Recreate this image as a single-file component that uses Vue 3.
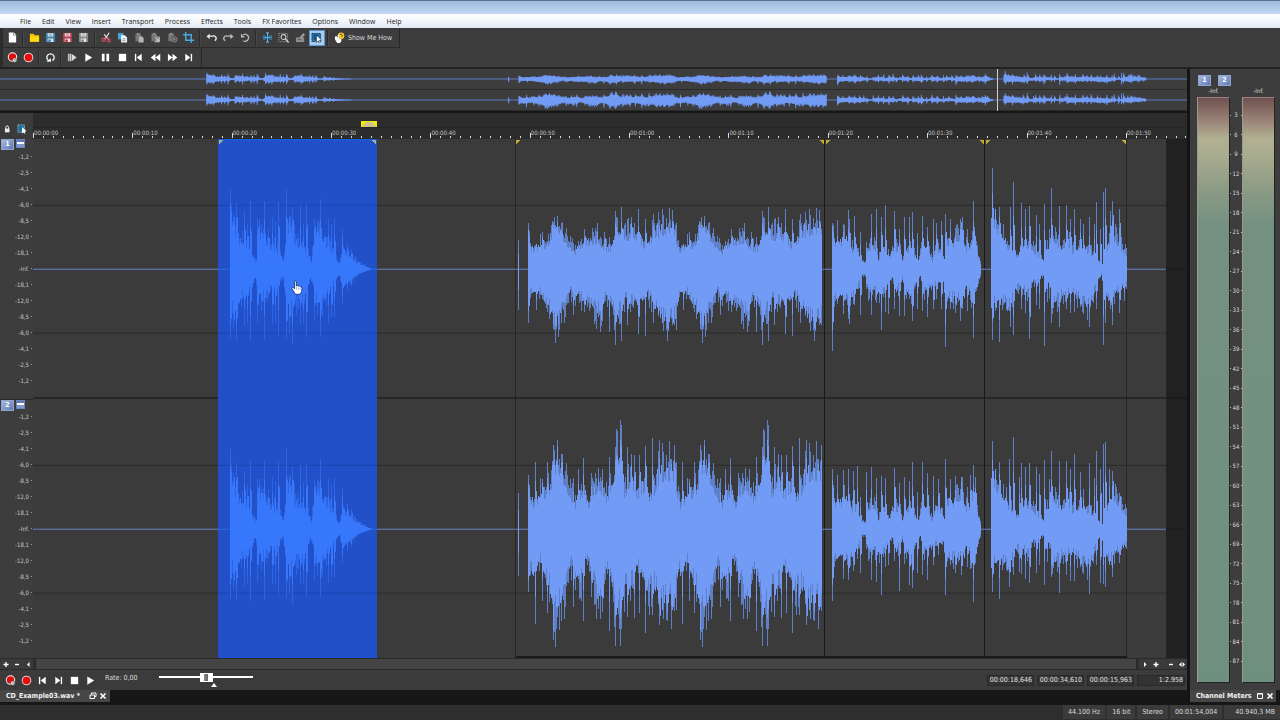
<script setup>
import { ref } from "vue";

const LANE_W = 1154;
const DATA_END = 1133;
const MID = 130;
const PX_PER_10S = 99.35;

const menus = ["File", "Edit", "View", "Insert", "Transport", "Process", "Effects", "Tools", "FX Favorites", "Options", "Window", "Help"];

// icon markup, drawn on a 12x12 grid
const floppy = (c) => `<path d="M1 1h10v10H1z" fill="${c}"/><path d="M3 1h6v4H3zM3 7h6v4H3z" fill="#e8e8e8"/><path d="M4 2h4M4 3.5h4M4 8.5h2v2.5H4z" stroke="${c}" stroke-width=".7" fill="${c}"/>`;
const clip = '<path d="M1.500 2h6v2.500H5V10H1.500z" fill="#777"/><path d="M3 1h3v2H3z" fill="#8c8c8c"/>';
const icons = {
  new: '<path d="M2 0.500h5.500L10 3v8.500H2z" fill="#fff"/><path d="M7 .5v3h3" fill="none" stroke="#777" stroke-width=".8"/>',
  open: '<path d="M1 2h4l1 1.500h5V10.500H1z" fill="#f5c400"/><path d="M1 5h10v5.500H1z" fill="#ffd910"/>',
  save: floppy("#3d83ad"),
  saveAs: floppy("#b8394d"),
  saveAll: floppy("#858585"),
  cut: '<path d="M9 .8L4 8M3.500 2.500L8.500 8.500" stroke="#e3e3e3" stroke-width="1.300"/><circle cx="2.800" cy="8.600" r="1.700" fill="none" stroke="#d04b5c" stroke-width="1.300"/><circle cx="8.600" cy="9.300" r="1.500" fill="none" stroke="#d04b5c" stroke-width="1.200"/><path d="M3 6.500l5.500.4" stroke="#d04b5c"/>',
  copy: '<path d="M1 1h6v7H1z" fill="#4aa4dc"/><path d="M4.500 3.500h4L11 6v5.500H4.500z" fill="#f4f4f4"/><path d="M6 7.500h3.500M6 9.500h3.500" stroke="#4a8cb8" stroke-width=".8"/>',
  paste: clip + '<path d="M5 4.500h3.500l2 2V11.500H5z" fill="#b4b4b4"/>',
  pasteMix: clip + '<path d="M5 4.500h5.500v7H5z" fill="#8a8a8a"/><path d="M6 6l4 4M10 6v4H6" stroke="#ddd" fill="none"/>',
  pasteNew: clip + '<circle cx="8" cy="8" r="3" fill="#555" stroke="#8a8a8a"/><path d="M7 6.500l2.500 1.500L7 9.500z" fill="#999"/>',
  crop: '<path d="M3 0v9h9M0 3h9v9" fill="none" stroke="#4aa8e4" stroke-width="1.600"/>',
  undo: '<path d="M2.500 4.500h5a2.600 2.600 0 0 1 2 4.800" fill="none" stroke="#eee" stroke-width="1.500"/><path d="M0.500 5L4 2v5.500z" fill="#eee"/>',
  redo: '<path d="M9 4.500H4.500a2.600 2.600 0 0 0-2 4.800" fill="none" stroke="#bbb" stroke-width="1.500"/><path d="M11.500 5L8 2v5.500z" fill="#bbb"/>',
  repeat: '<path d="M3.500 3a3.800 3.800 0 1 1 0 6.500" fill="none" stroke="#bbb" stroke-width="1.400"/><path d="M1 1.500v4.500h4.500z" fill="#bbb"/>',
  edit: '<path d="M1 3.500h3v5H1zM8 3.500h3v5H8z" fill="#2f79a8"/><path d="M6 1v10M4.500 1h3M4.500 11h3M3 6h6" stroke="#5db3e8" stroke-width="1.200"/>',
  magnify: '<path d="M1 1.500h9.500v9H1z" fill="none" stroke="#aaa" stroke-dasharray="1 1"/><circle cx="6" cy="5.500" r="2.600" fill="#333" stroke="#ccc" stroke-width="1.200"/><path d="M8 7.500l3.500 4" stroke="#ddd" stroke-width="1.400"/>',
  pencil: '<path d="M1 6h9v5H1z" fill="#8c8c8c"/><path d="M4 7l5-6 2 1.500L7 8z" fill="#999"/><path d="M3 8h4" stroke="#555"/>',
  event: '<path d="M1 1.500h9.500v9H1z" fill="#2374b0" stroke="#0d2c4a" stroke-dasharray="1.500 1"/><path d="M3 3.500h5M3 5.500h5M3 7.500h3" stroke="#0f3354"/><path d="M6 3.500v8l2-1.800 1.200 2 1-.7-1-1.900 2.300-.3z" fill="#fff" stroke="#123" stroke-width=".5"/>',
  eventSmall: '<path d="M1 1h8v9H1z" fill="#1f6e9c" stroke="#a9cfe2" stroke-dasharray="1.200 1"/><path d="M6 3.500v8l2-1.800 1.200 2 1-.7-1-1.900 2.300-.3z" fill="#fff"/>',
  help: '<circle cx="7.800" cy="4" r="3.500" fill="#f3c927"/><path d="M6.500 3q1.500-1.500 2.500 0t-1.300 2" stroke="#6b5200" fill="none"/><path d="M1 5l2-.5 1 2V3h1.300v4l2.700.7V10l-1.500 2H3.500L1 8z" fill="#fff"/>',
  recArm: '<circle cx="6" cy="5.500" r="4.600" fill="#e00d0d" stroke="#f4f4f4" stroke-width="1.100"/><circle cx="8.500" cy="8.800" r="2.300" fill="#fff" stroke="#555" stroke-width=".7"/><path d="M8.500 7.500v1.500h1.200" stroke="#333" fill="none" stroke-width=".7"/>',
  rec: '<circle cx="6" cy="6" r="4.700" fill="#e80a0a" stroke="#e2cccc" stroke-width="1.100"/>',
  loop: '<path d="M4 9.500a4 4 0 1 1 4 0" fill="none" stroke="#f4f4f4" stroke-width="1.500"/><path d="M1.500 10.500h5V6.500z" fill="#f4f4f4"/>',
  playAll: '<path d="M1.500 2v8" stroke="#ddd"/><path d="M3.500 2v8" stroke="#ddd" stroke-width="1.600"/><path d="M5 2l5.500 4L5 10z" fill="#ddd"/>',
  play: '<path d="M2.500 1.500L10 6l-7.500 4.500z" fill="#fff"/>',
  pause: '<path d="M2 2h3v8H2zM7 2h3v8H7z" fill="#fff"/>',
  stop: '<path d="M2 2h8v8H2z" fill="#fff"/>',
  start: '<path d="M2.800 2v8" stroke="#fff" stroke-width="1.500"/><path d="M9.500 2v8L4 6z" fill="#fff"/>',
  rewind: '<path d="M6 2v8L.8 6zM11.200 2v8L6 6z" fill="#fff"/>',
  forward: '<path d="M1 2v8l5-4zM6 2v8l5.200-4z" fill="#fff"/>',
  end: '<path d="M9.200 2v8" stroke="#fff" stroke-width="1.500"/><path d="M2.500 2v8L8 6z" fill="#fff"/>',
  lock: '<path d="M3.500 5.500h5.500v4.500H3.500z" fill="#eee"/><path d="M4.500 6V4a1.700 1.700 0 0 1 3.400 0v2" fill="none" stroke="#eee" stroke-width="1.200"/>',
};

const editBar = [
  [["new", "New"]],
  [["open", "Open"], ["save", "Save"], ["saveAs", "Save As"], ["saveAll", "Save All"]],
  [["cut", "Cut"], ["copy", "Copy"], ["paste", "Paste"], ["pasteMix", "Mix"], ["pasteNew", "Paste to New"], ["crop", "Trim"]],
  [["undo", "Undo"], ["redo", "Redo"], ["repeat", "Repeat"]],
  [["edit", "Edit Tool"], ["magnify", "Magnify Tool"], ["pencil", "Pencil Tool"], ["event", "Event Tool"]],
];
const playBar = [
  [["recArm", "Arm for Record"], ["rec", "Record"]],
  [["loop", "Loop Playback"]],
  [["playAll", "Play All"], ["play", "Play"], ["pause", "Pause"], ["stop", "Stop"], ["start", "Go to Start"], ["rewind", "Rewind"], ["forward", "Forward"], ["end", "Go to End"]],
];
const miniBar = [["recArm", "Arm for Record"], ["rec", "Record"], ["start", "Go to Start"], ["end", "Go to End"], ["stop", "Stop"], ["play", "Play"]];

const dbLabels = ["-1,2", "-2,5", "-4,1", "-6,0", "-8,5", "-12,0", "-18,1", "-Inf.", "-18,1", "-12,0", "-8,5", "-6,0", "-4,1", "-2,5", "-1,2"];
const meterLabels = Array.from({ length: 29 }, (_, i) => (i + 1) * 3);
const rulerLabels = Array.from({ length: 12 }, (_, i) => `00:0${Math.floor(i / 6)}:${i % 6}0`);
const minorTicks = Array.from({ length: 117 }, (_, i) => i).filter((i) => i % 10);

// envelopes: flat lists of x, level; peaks: [x, up, down]
const intro = {
  x: 197, len: 142,
  up: [0, 50, 3, 44, 8, 30, 12, 24, 18, 24, 22, 12, 26, 8, 28, 38, 34, 30, 40, 22, 48, 18, 53, 8, 56, 34, 60, 48, 65, 28, 72, 22, 78, 14, 81, 7, 85, 38, 90, 30, 98, 22, 105, 12, 109, 5, 112, 20, 118, 13, 124, 9, 130, 5, 137, 2, 142, 0],
  down: [0, 38, 6, 36, 12, 26, 20, 20, 25, 8, 28, 25, 34, 25, 40, 18, 48, 14, 53, 7, 56, 32, 62, 38, 68, 26, 75, 22, 80, 8, 85, 24, 92, 34, 98, 22, 105, 12, 109, 5, 112, 18, 118, 13, 124, 8, 130, 4, 142, 0],
  peaks: [[0, 80, 70], [3, 56, 60], [6, 66, 71], [14, 58, 57], [17, 45, 54], [20, 68, 72], [27, 50, 53], [31, 44, 42], [34, 68, 71], [38, 40, 30], [42, 52, 55], [45, 48, 54], [48, 67, 66], [56, 80, 69], [59, 54, 65], [62, 62, 75], [70, 64, 55], [73, 46, 54], [76, 65, 68], [84, 50, 52], [87, 48, 46], [90, 70, 68], [94, 34, 30], [98, 50, 54], [101, 45, 48], [104, 51, 48], [112, 40, 34], [117, 25, 22], [121, 20, 18]],
};
const band1 = {
  x: 495, len: 294, period: 147,
  up: [0, 32, 4, 19, 12, 22, 20, 24, 25, 42, 33, 36, 39, 26, 47, 17, 55, 26, 68, 31, 75, 22, 82, 17, 87, 36, 93, 32, 105, 36, 118, 22, 125, 36, 132, 39, 145, 41, 151, 17],
  down: [0, 28, 5, 20, 12, 22, 20, 34, 26, 48, 32, 42, 38, 34, 42, 21, 52, 26, 62, 34, 72, 40, 78, 24, 87, 44, 93, 38, 97, 28, 105, 31, 116, 30, 119, 22, 125, 32, 132, 44, 139, 50, 147, 44, 152, 22],
  peaks: [[0, 46, 54], [8, 0, 41], [14, 37, 30], [19, 28, 43], [25, 47, 60], [27, 44, 74], [30, 42, 68], [32, 40, 0], [45, 20, 46], [56, 40, 42], [69, 46, 30], [73, 0, 57], [76, 37, 0], [81, 32, 63], [87, 58, 76], [93, 62, 72], [99, 0, 56], [103, 52, 0], [110, 60, 65], [117, 50, 67], [125, 55, 54], [131, 49, 0], [138, 51, 60], [140, 45, 62], [144, 59, 50]],
};
const band2 = {
  x: 495, len: 294, period: 147,
  up: [0, 36, 5, 24, 14, 34, 22, 39, 25, 62, 29, 66, 34, 55, 39, 42, 42, 34, 47, 24, 55, 39, 60, 24, 66, 42, 72, 42, 79, 29, 85, 46, 88, 68, 93, 62, 96, 36, 102, 48, 109, 34, 117, 46, 121, 32, 126, 40, 131, 55, 139, 58, 146, 58, 149, 34, 153, 24],
  down: [0, 38, 5, 40, 12, 29, 17, 41, 22, 56, 25, 84, 29, 74, 35, 66, 40, 44, 44, 29, 52, 56, 55, 28, 60, 31, 69, 60, 75, 54, 79, 31, 87, 72, 93, 72, 97, 54, 105, 48, 109, 31, 119, 60, 125, 48, 132, 70, 139, 64, 146, 66, 150, 40, 155, 28],
  peaks: [[0, 54, 63], [7, 67, 95], [14, 50, 72], [19, 67, 84], [25, 84, 111], [29, 86, 88], [33, 75, 84], [45, 51, 78], [50, 60, 50], [55, 71, 92], [63, 56, 68], [70, 61, 80], [74, 60, 82], [81, 72, 102], [87, 82, 117], [92, 109, 117], [93, 104, 100], [99, 82, 88], [103, 75, 0], [106, 74, 89], [111, 74, 84], [117, 83, 104], [124, 91, 86], [131, 89, 96], [138, 74, 91], [143, 70, 100], [146, 84, 75]],
};
const verse = {
  x: 799, len: 149,
  up: [0, 37, 5, 19, 10, 28, 17, 27, 20, 20, 25, 20, 28, 10, 33, 6, 34, 20, 44, 22, 46, 9, 50, 21, 54, 17, 57, 9, 60, 21, 68, 21, 70, 9, 74, 19, 80, 18, 86, 7, 90, 22, 96, 20, 100, 8, 104, 20, 110, 18, 112, 8, 114, 28, 120, 25, 125, 32, 130, 35, 133, 20, 137, 22, 140, 33, 144, 28, 146, 12, 149, 2],
  down: [0, 38, 5, 24, 10, 25, 16, 32, 22, 24, 26, 16, 29, 6, 33, 6, 36, 22, 44, 20, 50, 23, 56, 12, 60, 9, 64, 22, 70, 9, 74, 20, 80, 25, 84, 14, 88, 7, 92, 22, 98, 18, 104, 14, 111, 12, 113, 36, 118, 25, 125, 28, 132, 26, 134, 14, 140, 30, 143, 22, 146, 12, 149, 2],
  peaks: [[0, 46, 82], [5, 49, 35], [11, 45, 45], [16, 59, 50], [17, 50, 55], [22, 53, 36], [28, 37, 46], [34, 20, 20], [39, 55, 46], [44, 60, 34], [49, 52, 61], [53, 64, 43], [56, 20, 45], [62, 58, 40], [67, 40, 47], [72, 52, 47], [77, 52, 30], [80, 57, 52], [85, 36, 40], [90, 53, 42], [95, 42, 48], [101, 50, 40], [104, 46, 30], [109, 48, 40], [113, 55, 78], [118, 50, 40], [123, 41, 44], [128, 50, 52], [130, 49, 40], [135, 40, 42], [141, 68, 69], [142, 42, 34]],
};
const outro = {
  x: 958, len: 136,
  up: [0, 50, 4, 50, 6, 38, 12, 28, 17, 22, 22, 18, 26, 12, 30, 20, 34, 24, 40, 22, 45, 15, 50, 10, 52, 8, 56, 24, 58, 10, 61, 30, 65, 30, 70, 20, 76, 30, 80, 18, 88, 20, 95, 18, 100, 16, 106, 10, 110, 5, 112, 5, 114, 18, 118, 24, 122, 34, 126, 28, 131, 20, 136, 14],
  down: [0, 38, 4, 30, 8, 28, 12, 30, 16, 36, 20, 30, 24, 20, 28, 16, 36, 22, 42, 12, 52, 6, 56, 22, 58, 6, 61, 36, 66, 28, 72, 22, 80, 22, 88, 28, 96, 36, 100, 30, 106, 12, 110, 5, 113, 24, 118, 30, 124, 22, 130, 18, 136, 14],
  peaks: [[1, 101, 71], [4, 58, 42], [8, 62, 73], [19, 62, 58], [22, 87, 66], [30, 66, 40], [34, 60, 44], [38, 63, 70], [45, 54, 36], [48, 45, 40], [53, 65, 77], [58, 40, 30], [60, 81, 54], [68, 63, 58], [75, 64, 40], [79, 50, 44], [83, 60, 43], [89, 50, 38], [92, 45, 0], [98, 52, 58], [103, 45, 0], [105, 67, 40], [109, 40, 0], [112, 77, 76], [114, 81, 54], [119, 58, 40], [121, 68, 56], [128, 60, 44], [133, 0, 32]],
};
const verse2 = {
  ...verse,
  peaks: [[0, 60, 72], [5, 54, 30], [11, 59, 50], [16, 60, 51], [21, 58, 42], [25, 63, 30], [28, 32, 44], [34, 57, 20], [39, 62, 51], [44, 51, 53], [49, 53, 66], [53, 51, 38], [56, 0, 36], [62, 61, 32], [67, 46, 62], [72, 52, 35], [77, 48, 56], [80, 67, 59], [85, 37, 44], [90, 67, 46], [95, 56, 51], [101, 53, 36], [106, 50, 26], [113, 70, 66], [118, 50, 36], [123, 53, 44], [129, 52, 46], [135, 42, 38], [138, 54, 40], [141, 64, 73], [143, 52, 34]],
};
const outro2 = {
  ...outro,
  peaks: [[1, 88, 63], [8, 67, 70], [15, 42, 30], [18, 70, 58], [22, 92, 46], [28, 52, 43], [30, 66, 45], [34, 62, 50], [38, 66, 54], [45, 62, 44], [48, 55, 36], [53, 69, 56], [58, 50, 20], [60, 78, 48], [68, 68, 64], [75, 68, 46], [79, 60, 52], [83, 75, 52], [89, 57, 38], [92, 40, 0], [98, 66, 65], [103, 51, 0], [105, 78, 36], [109, 60, 54], [112, 85, 55], [114, 87, 58], [118, 60, 36], [121, 58, 48], [128, 36, 34]],
};
const click = (up, down) => ({ x: 485, len: 1, up: [0, 1], down: [0, 1], peaks: [[0, up, down]] });

function noise(n) {
  const v = Math.sin(n * 127.1 + 11.7) * 43758.5453;
  return v - Math.floor(v);
}

function level(env, x) {
  for (let i = 2; i < env.length; i += 2) {
    if (x <= env[i]) {
      const t = (x - env[i - 2]) / (env[i] - env[i - 2]);
      return env[i - 1] + t * (env[i + 1] - env[i - 1]);
    }
  }
  return env[env.length - 1];
}

// one 1px column per sample; body is the solid part, peaks the thin dim lines
function draw(clip) {
  let body = "";
  let peaks = "";
  for (let x = 0; x < clip.len; x++) {
    const lx = clip.period && x >= clip.period + 5 ? x - clip.period : x;
    const u0 = level(clip.up, lx);
    const d0 = level(clip.down, lx);
    const u = Math.round(u0 * (0.82 + 0.4 * noise(lx) ** 2));
    const d = Math.round(d0 * (0.82 + 0.4 * noise(lx + 500) ** 2));
    body += `M${clip.x + x} ${MID - u}h1v${u + d}h-1z`;
    const u2 = Math.round(u0 * (1 + 0.6 * noise(lx + 900) ** 3));
    const d2 = Math.round(d0 * (1 + 0.6 * noise(lx + 1300) ** 3));
    peaks += `M${clip.x + x} ${MID - u2}h1v${u2 + d2}h-1z`;
    for (const [px, pu, pd] of clip.peaks) {
      if (px === lx) {
        peaks += `M${clip.x + x} ${MID - pu}h1v${pu + pd}h-1z`;
        const bu = Math.round(u + Math.max(0, pu - u) * 0.5);
        const bd = Math.round(d + Math.max(0, pd - d) * 0.5);
        body += `M${clip.x + x} ${MID - bu}h1v${bu + bd}h-1z`;
      } else if (px + 1 === lx) {
        const nu = Math.round(u + Math.max(0, pu - u) * 0.6 * noise(lx + 70));
        const nd = Math.round(d + Math.max(0, pd - d) * 0.6 * noise(lx + 90));
        body += `M${clip.x + x} ${MID - nu}h1v${nu + nd}h-1z`;
      }
    }
  }
  return { body, peaks };
}

function join(clips) {
  const parts = clips.map(draw);
  return { body: parts.map((p) => p.body).join(""), peaks: parts.map((p) => p.peaks).join("") };
}

const selected = draw(intro);
const tracks = [
  { id: 1, wave: join([click(29, 41), band1, verse, outro]) },
  { id: 2, wave: join([click(36, 47), band2, verse2, outro2]) },
];

const flagsRight = [483, 793, 953];
const flagsLeft = [791, 951, 1093];

const rate = ref(50);
const times = ref([
  { label: "Selection start", value: "00:00:18,646" },
  { label: "Selection end", value: "00:00:34,610" },
  { label: "Selection length", value: "00:00:15,963" },
  { label: "Zoom ratio", value: "1:2.958" },
]);
const statusCells = ["44.100 Hz", "16 bit", "Stereo", "00:01:54,004", "40.940,3 MB"];
</script>

<template>
  <div class="app">
    <header class="title-bar"></header>
    <nav class="menu-bar">
      <button v-for="m in menus" :key="m" type="button">{{ m }}</button>
    </nav>

    <div class="toolbars">
      <div class="toolbar">
        <template v-for="(group, gi) in editBar" :key="gi">
          <span v-if="gi" class="sep"></span>
          <div class="group" :class="`n${group.length}`">
            <button v-for="[icon, label] in group" :key="icon" type="button" class="tool" :class="{ on: icon === 'event' }" :aria-label="label">
              <svg viewBox="0 0 12 12" v-html="icons[icon]"></svg>
            </button>
          </div>
        </template>
        <span class="sep"></span>
        <button type="button" class="show-me">
          <svg viewBox="0 0 12 12" v-html="icons.help"></svg>
          <span>Show Me How</span>
        </button>
      </div>
      <div class="toolbar">
        <template v-for="(group, gi) in playBar" :key="gi">
          <span v-if="gi" class="sep"></span>
          <div class="group" :class="`n${group.length}`">
            <button v-for="[icon, label] in group" :key="icon" type="button" class="tool" :aria-label="label">
              <svg viewBox="0 0 12 12" v-html="icons[icon]"></svg>
            </button>
          </div>
        </template>
      </div>
    </div>

    <div class="workspace">
      <main class="editor">
        <div class="overview">
          <div v-for="t in tracks" :key="t.id" class="overview-row">
            <svg :viewBox="`0 0 ${DATA_END} 260`" preserveAspectRatio="none">
              <path :d="`M0 ${MID - 6}h${DATA_END}v12H0z`" fill="#5c7cc4" />
              <path :d="t.wave.peaks + selected.peaks" fill="#6287da" />
              <path :d="t.wave.body + selected.body" fill="#729bf5" />
            </svg>
          </div>
          <span class="play-line"></span>
        </div>

        <div class="ruler-row">
          <div class="ruler-tools">
            <button type="button" aria-label="Lock"><svg viewBox="0 0 12 12" v-html="icons.lock"></svg></button>
            <button type="button" aria-label="Event Tool"><svg viewBox="0 0 12 12" v-html="icons.eventSmall"></svg></button>
          </div>
          <div class="ruler">
            <svg class="ruler-marks" :viewBox="`0 0 ${LANE_W} 26`" preserveAspectRatio="none" shape-rendering="crispEdges">
              <path d="M0 14.500H1154" stroke="#252525" />
              <rect v-for="(l, i) in rulerLabels" :key="l" :x="i * PX_PER_10S" y="20" width="1" height="5" fill="#ddd" />
              <rect v-for="i in minorTicks" :key="i" :x="i * PX_PER_10S / 10" y="23" width="1" height="2" fill="#ddd" />
              <path d="M328 8h16v6h-16z" fill="#f3e911" />
              <path d="M329 14l4-5h6l4 5z" fill="#cfc389" />
            </svg>
            <div class="ruler-labels">
              <span v-for="l in rulerLabels" :key="l">{{ l }}</span>
            </div>
          </div>
        </div>

        <section v-for="t in tracks" :key="t.id" class="track">
          <div class="track-head">
            <div class="badges">
              <button type="button" class="badge">{{ t.id }}</button>
              <button type="button" class="badge mini" aria-label="Minimize track"></button>
            </div>
            <ul class="db">
              <li v-for="(l, i) in dbLabels" :key="i">{{ l }}</li>
            </ul>
          </div>
          <div class="lane">
            <svg :viewBox="`0 0 ${LANE_W} 260`" preserveAspectRatio="none" shape-rendering="crispEdges">
              <rect :width="DATA_END" height="260" fill="#3b3b3b" />
              <path :d="`M0 66.500H${DATA_END}M0 194.500H${DATA_END}`" stroke="#2a2a2a" />
              <path :d="`M${DATA_END} 130.500H${LANE_W}`" stroke="#1b1b1b" />
              <path d="M482.500 0V260M1093.500 0V260" stroke="#262626" />
              <path d="M791.500 0V260M951.500 0V260" stroke="#191919" />
              <path :d="`M0 130.500H${DATA_END}`" stroke="#6682c6" />
              <path :d="t.wave.peaks" fill="#5f7fc6" />
              <path :d="t.wave.body" fill="#729bf5" />
              <rect x="185" width="159" height="260" fill="#2150c8" />
              <path d="M185 66.500H344M185 194.500H344" stroke="#1b45b2" />
              <path d="M185 130.500H344" stroke="#2f66e2" />
              <path :d="selected.peaks" fill="#2d65e4" />
              <path :d="selected.body" fill="#3677fb" />
              <g v-if="t.id === 1">
                <path d="M185 .5H344" stroke="#1561e0" />
                <path v-for="x in flagsRight" :key="x" :d="`M${x} 1h5l-5 5z`" fill="#c2ab35" />
                <path v-for="x in flagsLeft" :key="x" :d="`M${x} 1h-5l5 5z`" fill="#c2ab35" />
                <path d="M186 1h5l-5 5zM343 1h-5l5 5z" fill="#a9b08a" />
              </g>
              <g v-else>
                <path d="M483 258.500H1094" stroke="#1b1b1b" stroke-width="2" />
                <path d="M185 259.500H344" stroke="#0f5cf0" />
              </g>
              <path v-if="t.id === 1" d="M0 259.500H185M344 259.500H1154" stroke="#141414" />
            </svg>
            <svg v-if="t.id === 1" class="hand" viewBox="0 0 12 15">
              <path d="M3.500 1.500Q4.500 .3 5.300 1.500V6l1-.6 1 .8 1-.4.9 1 1.300.2.500 1.500-.5 3-1.200 2.800H4.300L2.800 11.500.8 8.500l.6-1 1 .2 1.200 1.200z" fill="#fff" stroke="#112a66" stroke-width=".8" />
              <path d="M5.500 7v2.500M7.300 7.500v2M9 8v2" stroke="#6b7fb5" stroke-width=".6" />
            </svg>
          </div>
        </section>

        <div class="scroll-row">
          <button type="button" aria-label="Zoom in level"><svg viewBox="0 0 8 8"><path d="M4 2v5M1.500 4.500h5" /></svg></button>
          <button type="button" aria-label="Zoom out level"><svg viewBox="0 0 8 8"><path d="M2 4.500h4" /></svg></button>
          <button type="button" aria-label="Scroll left"><svg viewBox="0 0 8 8"><path class="fill" d="M5.500 2v5L3 4.500z" /></svg></button>
          <div class="scroll-thumb"></div>
          <button type="button" aria-label="Scroll right"><svg viewBox="0 0 8 8"><path class="fill" d="M3 2v5l2.500-2.500z" /></svg></button>
          <button type="button" aria-label="Zoom in time"><svg viewBox="0 0 8 8"><path d="M4 2v5M1.500 4.500h5" /></svg></button>
          <button type="button" class="spaced" aria-label="Zoom out time"><svg viewBox="0 0 8 8"><path d="M2 4.500h4" /></svg></button>
          <button type="button" aria-label="Zoom selection"><svg viewBox="0 0 8 8"><path class="fill" d="M3.500 2v5L1 4.500zM4.500 2v5L7 4.500z" /></svg></button>
        </div>

        <div class="transport">
          <button v-for="[icon, label] in miniBar" :key="icon" type="button" class="tool" :aria-label="label">
            <svg viewBox="0 0 12 12" v-html="icons[icon]"></svg>
          </button>
          <label class="rate" for="rate">Rate: 0,00</label>
          <div class="slider">
            <input id="rate" v-model="rate" type="range" min="0" max="100" />
            <span class="center-mark"></span>
          </div>
          <div class="times">
            <input v-for="t in times" :key="t.label" v-model="t.value" type="text" :aria-label="t.label" />
          </div>
        </div>

        <div class="tab-strip">
          <div class="tab file-tab">
            <span>CD_Example03.wav *</span>
            <button type="button" aria-label="Restore window"><svg viewBox="0 0 8 8"><path d="M2.500 2.500V1h4.500v3.500H5.500M1 3h4.500v3.500H1z" /></svg></button>
            <button type="button" aria-label="Close file"><svg viewBox="0 0 8 8"><path class="x" d="M1.500 1.500l5 5M6.500 1.500l-5 5" /></svg></button>
          </div>
        </div>
      </main>

      <aside class="meters">
        <div class="meter-panel">
          <div class="meter-badges">
            <button type="button" class="badge">1</button>
            <button type="button" class="badge">2</button>
          </div>
          <div class="meter-grid">
            <span class="peak">-Inf.</span>
            <span></span>
            <span class="peak">-Inf.</span>
            <div class="bar"></div>
            <ul class="scale">
              <li v-for="n in meterLabels" :key="n">{{ n }}</li>
            </ul>
            <div class="bar"></div>
          </div>
        </div>
        <div class="tab-strip">
          <div class="tab meter-tab">
            <span>Channel Meters</span>
            <button type="button" aria-label="Maximize"><svg viewBox="0 0 8 8"><path d="M1.500 1.500h5v5h-5zM1.500 2h5" /></svg></button>
            <button type="button" aria-label="Close meters"><svg viewBox="0 0 8 8"><path class="x" d="M1.500 1.500l5 5M6.500 1.500l-5 5" /></svg></button>
          </div>
        </div>
      </aside>
    </div>

    <footer class="status">
      <span v-for="s in statusCells" :key="s">{{ s }}</span>
    </footer>
  </div>
</template>

<style>
body { margin: 0; background: #2e2e2e; }
</style>

<style scoped>
.app { height: 100vh; min-height: 480px; display: flex; flex-direction: column; overflow: hidden; background: #3b3b3b; color: #dcdcdc; font: 7px/8px "DejaVu Sans Condensed", "DejaVu Sans", sans-serif; }
.app * { box-sizing: border-box; }
button { margin: 0; padding: 0; border: 0; background: none; color: inherit; font: inherit; display: flex; align-items: center; justify-content: center; }
svg { display: block; }
ul { list-style: none; margin: 0; padding: 0; }

.title-bar { flex: none; height: 14px; border-top: 1px solid #5d7590; background: linear-gradient(#9dbbdf, #c2d9f3); }
.menu-bar { flex: none; height: 14px; display: flex; align-items: center; gap: 11px; padding: 1px 0 0 20px; background: linear-gradient(#fff, #f3f6fb 50%, #e2e8f3); color: #1c1c1c; font: 7px/12px "Open Sans", "Noto Sans", sans-serif; white-space: nowrap; }

.toolbars { flex: none; border-bottom: 2px solid #222; background: #3d3d3d; }
.toolbar { display: flex; align-items: center; width: fit-content; height: 20px; padding-left: 1px; border-right: 1px solid #262626; border-left: 3px solid #2c2c2c; }
.toolbar:first-child { border-bottom: 1px solid #2a2a2a; }
.toolbar:last-child { height: 19px; padding-right: 4px; }
.sep { width: 2px; height: 16px; margin: 0 2px; border-left: 1px solid #2b2b2b; border-right: 1px solid #484848; }
.group { display: flex; justify-content: space-between; width: 16px; }
.group.n2 { width: 32px; }
.group.n3 { width: 50px; }
.group.n4 { width: 66px; }
.group.n6 { width: 99px; }
.group.n8 { width: 133px; }
.tool { width: 16px; height: 16px; flex: none; }
.tool svg { width: 11px; height: 11px; }
.tool.on { background: #a9cdf2; outline: 1px solid #5b93cc; outline-offset: -1px; }
.show-me { gap: 3px; padding: 0 7px 0 3px; }
.show-me svg { width: 11px; height: 11px; }

.workspace { flex: 1; min-height: 0; display: flex; }
.editor { flex: 1; min-width: 0; display: flex; flex-direction: column; }

.overview { position: relative; flex: none; height: 44px; border-bottom: 2px solid #161616; background: #3d3d3d; }
.overview-row { height: 21px; border-bottom: 1px solid #2b2b2b; }
.overview-row svg { width: 100%; height: 20px; }
.play-line { position: absolute; top: 0; bottom: 0; left: 84%; width: 1px; background: #cfcfcf; }

.ruler-row { flex: none; display: flex; height: 26px; }
.ruler-tools { width: 33px; flex: none; display: flex; align-items: flex-end; gap: 5px; padding: 0 0 5px 2px; }
.ruler-tools svg { width: 10px; height: 10px; }
.ruler { position: relative; flex: 1; min-width: 0; overflow: hidden; background: #2c2c2c; }
.ruler-marks { position: absolute; inset: 0; width: 100%; height: 100%; }
.ruler-labels { display: flex; padding-top: 16px; font-size: 6px; line-height: 8px; }
.ruler-labels span { flex: 0 0 8.609%; padding-left: 1px; color: #c4c4c4; white-space: nowrap; }

.track { flex: 1; min-height: 0; display: flex; }
.track-head { position: relative; width: 33px; flex: none; display: flex; flex-direction: column; justify-content: center; background: #3d3d3d; }
.track + .track .track-head { border-top: 1px solid #2a2a2a; }
.badges { position: absolute; top: 0; left: 1px; display: flex; align-items: flex-start; gap: 2px; }
.badge { width: 13px; height: 11px; border: 1px solid #8ea4d2; background: linear-gradient(135deg, #a9b9dc, #5f79b5); color: #fff; font-size: 7px; line-height: 9px; font-weight: bold; }
.badge.mini { width: 9px; height: 9px; border-color: #6c84bd; background: linear-gradient(#5f79b5 2px, #fff 2px, #fff 4px, #8298cb 4px); }
.db { flex: none; }
.db li { display: flex; align-items: center; justify-content: flex-end; gap: 2px; height: 16px; padding-right: 1px; font-size: 6px; line-height: 8px; color: #c8c8c8; }
.db li::after { content: ""; width: 1px; height: 1px; background: #999; }
.lane { position: relative; flex: 1; min-width: 0; background: #212121; }
.lane > svg:first-child { position: absolute; inset: 0; width: 100%; height: 100%; }
.lane .hand { position: absolute; left: 22.4%; top: 54.5%; width: 12px; height: 15px; }

.scroll-row { flex: none; display: flex; height: 12px; border-top: 1px solid #2a2a2a; border-bottom: 1px solid #2a2a2a; }
.scroll-row button { width: 11px; }
.scroll-row button.spaced { margin-left: 4px; }
.scroll-row svg { width: 8px; height: 8px; fill: none; stroke: #fff; stroke-width: 1.4; }
.scroll-row .fill { fill: #fff; stroke: none; }
.scroll-thumb { flex: 1; border-left: 3px solid #2c2c2c; border-right: 3px solid #2c2c2c; background: #444; }

.transport { flex: none; display: flex; align-items: center; height: 20px; padding: 0 2px; }
.rate { width: 61px; padding: 0 0 4px 7px; white-space: nowrap; color: #dcdcdc; }
.slider { position: relative; width: 96px; height: 16px; }
.slider input { display: block; width: 94px; height: 10px; margin: 0; appearance: none; background: linear-gradient(#fff, #fff) center / 100% 2px no-repeat; }
.slider input::-webkit-slider-thumb { appearance: none; width: 13px; height: 9px; border: 1px solid #fff; background: linear-gradient(90deg, #fff 3px, #888 3px, #666 7px, #fff 7px); }
.center-mark { position: absolute; left: 52px; bottom: 1px; border: 3px solid transparent; border-top: 0; border-bottom: 4px solid #fff; }
.times { display: flex; gap: 3px; margin-left: auto; }
.times input { width: 47px; height: 11px; padding: 0 1px; border: 1px solid #2a2a2a; background: #333; color: #e4e4e4; font: inherit; text-align: right; }
.times input:last-child { width: 48px; }

.tab-strip { flex: none; height: 15px; background: #171717; }
.tab { display: flex; align-items: center; gap: 2px; width: fit-content; height: 12px; padding: 0 3px 0 6px; background: #464646; color: #f2f2f2; font-weight: bold; white-space: nowrap; }
.tab span { margin-right: 2px; }
.tab svg { width: 8px; height: 8px; fill: none; stroke: #fff; stroke-width: 1; }
.tab .x { stroke-width: 1.6; }
.file-tab span { margin-right: 7px; }

.meters { width: 93px; flex: none; display: flex; flex-direction: column; border-left: 3px solid #141414; }
.meter-panel { flex: 1; min-height: 0; display: flex; flex-direction: column; padding: 6px 5px 7px 7px; background: #3d3d3d; }
.meter-badges { display: flex; gap: 7px; padding-left: 1px; }
.meter-grid { flex: 1; min-height: 0; display: grid; grid-template-columns: 33px 1fr 33px; grid-template-rows: 11px minmax(0, 1fr); }
.peak { text-align: center; font-size: 6px; line-height: 9px; }
.bar { border: 1px solid #222; border-top-color: #9a8080; border-left-color: #9a9a90; background: linear-gradient(#6f5150, #9c8578 4%, #b1b092 7%, #a8ab8e 10%, #8a9a84 16%, #749081 22%, #70907f); }
.scale { display: flex; flex-direction: column; justify-content: space-between; padding: 14px 0 18px; }
.scale li { display: flex; align-items: center; justify-content: space-between; height: 8px; font-size: 6px; line-height: 8px; }
.scale li::before, .scale li::after { content: ""; width: 1px; height: 1px; background: #bbb; }
.meter-tab { padding-right: 2px; }

.status { flex: none; display: flex; justify-content: flex-end; gap: 2px; height: 15px; padding-bottom: 1px; background: #2e2e2e; }
.status span { display: flex; align-items: center; justify-content: flex-end; padding: 0 5px; background: #3b3b3b; white-space: nowrap; }
.status span:last-child { padding-left: 11px; }
</style>
